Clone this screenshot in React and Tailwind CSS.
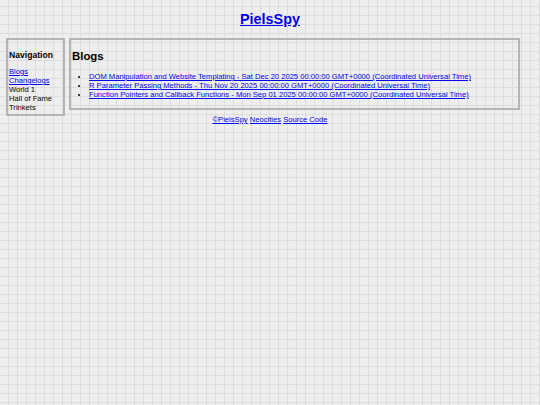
import React from "react";

const posts = [
  "DOM Manipulation and Website Templating - Sat Dec 20 2025 00:00:00 GMT+0000 (Coordinated Universal Time)",
  "R Parameter Passing Methods - Thu Nov 20 2025 00:00:00 GMT+0000 (Coordinated Universal Time)",
  "Function Pointers and Callback Functions - Mon Sep 01 2025 00:00:00 GMT+0000 (Coordinated Universal Time)",
];

const App = () => {
  return (
    <div className="min-h-screen w-[540px] bg-[#eeeeee] bg-[linear-gradient(to_right,#dddddd_1px,transparent_1px),linear-gradient(to_bottom,#dddddd_1px,transparent_1px)] bg-[size:9px_9px] bg-[position:8px_6px] font-['Liberation_Sans',Arial,sans-serif] text-[7.6px] leading-[9px] text-black">
      {/* Header */}
      <div className="pt-[11px] text-center">
        <a href="#" className="text-[14.4px] leading-[17px] font-bold text-[#0000ee] underline">
          PielsSpy
        </a>
      </div>

      {/* Main */}
      <div className="mt-[10px] flex items-start pl-[6px] pr-[20px] gap-[4px]">
        {/* Nav */}
        <aside className="w-[59px] h-[78px] border-2 border-[#b4b4b4] pl-[1px] pt-[10px]">
          <h3 className="text-[8.6px] leading-[10px] font-bold">Navigation</h3>
          <div className="mt-[7px] flex flex-col">
            <a href="#" className="text-[#0000ee] underline">Blogs</a>
            <a href="#" className="text-[#0000ee] underline">Changelogs</a>
            <span>World 1</span>
            <span>Hall of Fame</span>
            <span>Trinkets</span>
          </div>
        </aside>

        {/* Blogs */}
        <main className="flex-1 h-[72px] border-2 border-[#b4b4b4] pl-[1px] pt-[10px]">
          <h2 className="text-[11.4px] leading-[13px] font-bold">Blogs</h2>
          <ul className="mt-[9px] list-disc pl-[17px]">
            {posts.map((p) => (
              <li key={p}>
                <a href="#" className="text-[#0000ee] underline">{p}</a>
              </li>
            ))}
          </ul>
        </main>
      </div>

      {/* Footer */}
      <div className="-mt-px text-center">
        <a href="#" className="text-[#0000ee] underline">©PielsSpy</a>{" "}
        <a href="#" className="text-[#0000ee] underline">Neocities</a>{" "}
        <a href="#" className="text-[#0000ee] underline">Source Code</a>
      </div>
    </div>
  );
};

export default App;
